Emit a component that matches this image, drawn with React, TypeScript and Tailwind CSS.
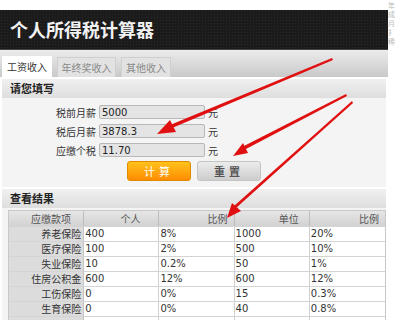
const cjk = "font-['Noto_Sans_CJK_SC','Noto_Sans',sans-serif]";
const num = "font-['DejaVu_Sans','Noto_Sans_CJK_SC',sans-serif]";

const rows = [
  ["养老保险", "400", "8%", "1000", "20%"],
  ["医疗保险", "100", "2%", "500", "10%"],
  ["失业保险", "10", "0.2%", "50", "1%"],
  ["住房公积金", "600", "12%", "600", "12%"],
  ["工伤保险", "0", "0%", "15", "0.3%"],
  ["生育保险", "0", "0%", "40", "0.8%"],
  ["", "", "", "", ""],
];

function Field({ label, value }: { label: string; value: string }) {
  return (
    <div className="flex items-center h-[14px]">
      <span className={`w-[97px] pr-[3px] text-right text-[10px] text-[#333] ${cjk}`}>{label}</span>
      <div className={`w-[106px] h-[14px] rounded-[2px] border border-[#b8b8b8] bg-[#e4e4e4] pl-[2px] text-[10px] leading-[13px] text-[#222] ${num}`}>
        {value}
      </div>
      <span className={`pl-[3px] text-[10px] text-[#333] ${cjk}`}>元</span>
    </div>
  );
}

export default function App() {
  return (
    <div className="relative w-[395px] h-[320px] overflow-hidden bg-white">
      <div className="flex w-[395px]">
        <div className="w-[388px] flex flex-col">
          <div className="h-[10px] bg-white" />
          <div className="h-[40px] bg-[#1b1b1b] bg-[radial-gradient(#2a2a2a_1px,transparent_1px)] bg-[length:3px_3px] flex items-center pl-[10px] border-b border-[#444]">
            <span className={`text-[18px] font-bold text-[#f2f2f2] ${cjk}`}>个人所得税计算器</span>
          </div>
          <div className="h-[27px] bg-gradient-to-b from-[#ececec] to-[#c9c9c9] flex items-end gap-[5px] pl-[2px]">
            <div className={`h-[21px] w-[50px] bg-white flex items-center justify-center text-[10px] text-[#333] ${cjk}`}>工资收入</div>
            <div className={`h-[20px] w-[59px] bg-[#e2e2e2] border border-[#cfcfcf] border-b-0 flex items-center justify-center text-[10px] text-[#888] ${cjk}`}>年终奖收入</div>
            <div className={`h-[20px] w-[50px] bg-[#e2e2e2] border border-[#cfcfcf] border-b-0 flex items-center justify-center text-[10px] text-[#888] ${cjk}`}>其他收入</div>
          </div>
          <div className="bg-white pt-[2px] px-[2px]">
            <div className={`h-[19px] bg-gradient-to-b from-[#f0f0f0] to-[#dedede] flex items-center pl-[8px] text-[11px] font-bold text-[#222] ${cjk}`}>请您填写</div>
            <div className="bg-[#f4f4f4] pt-[7px] pb-[6px] flex flex-col gap-[5px]">
              <Field label="税前月薪" value="5000" />
              <Field label="税后月薪" value="3878.3" />
              <Field label="应缴个税" value="11.70" />
              <div className="flex gap-[6px] pl-[125px] mt-[-1px]">
                <div className={`w-[64px] h-[20px] rounded-[3px] bg-gradient-to-b from-[#ffc21a] to-[#ff8c00] border border-[#e08a00] flex items-center justify-center text-[11px] text-white tracking-[4px] ${cjk}`}>计算</div>
                <div className={`w-[64px] h-[20px] rounded-[3px] bg-gradient-to-b from-[#ececec] to-[#cdcdcd] border border-[#c4c4c4] flex items-center justify-center text-[11px] font-bold text-[#555] tracking-[4px] ${cjk}`}>重置</div>
              </div>
            </div>
            <div className={`mt-[2px] h-[19px] bg-gradient-to-b from-[#f0f0f0] to-[#dedede] flex items-center pl-[8px] text-[11px] font-bold text-[#222] ${cjk}`}>查看结果</div>
            <div className="bg-[#f4f4f4] pt-[2px] pl-[6px]">
              <div className="border border-[#c8c8c8] w-[378px]">
                <div className={`grid grid-cols-5 h-[15px] bg-gradient-to-b from-[#e6e6e6] to-[#d2d2d2] text-[10px] text-[#555] ${cjk}`}>
                  <div className="text-center pl-[10px] border-r border-[#bdbdbd] leading-[15px]">应缴款项</div>
                  <div className="text-right pr-[18px] border-r border-[#bdbdbd] leading-[15px]">个人</div>
                  <div className="text-right pr-[6px] border-r border-[#bdbdbd] leading-[15px]">比例</div>
                  <div className="text-right pr-[10px] border-r border-[#bdbdbd] leading-[15px]">单位</div>
                  <div className="text-right pr-[6px] leading-[15px]">比例</div>
                </div>
                {rows.map((r, i) => (
                  <div key={i} className="grid grid-cols-5 h-[15px] border-t border-[#d4d4d4]">
                    <div className={`bg-[#dcdcdc] text-right pr-[2px] text-[10px] leading-[14px] text-[#333] border-r border-[#c4c4c4] ${cjk}`}>{r[0]}</div>
                    {r.slice(1).map((c, j) => (
                      <div key={j} className={`bg-white pl-[1px] text-[10px] leading-[14px] text-[#333] ${j < 3 ? "border-r border-[#d0d0d0]" : ""} ${num}`}>{c}</div>
                    ))}
                  </div>
                ))}
              </div>
            </div>
          </div>
        </div>
        <div className={`flex-1 pt-[1px] flex flex-col items-center text-[7px] leading-[9px] text-[#bbb] ${cjk}`}>
          <span>年</span><span>成</span><span>月</span><span>扌</span><span>稀</span>
        </div>
      </div>
      <svg className="absolute inset-0 pointer-events-none" width="395" height="320" viewBox="0 0 395 320">
        <g fill="#e01010" stroke="none">
          <polygon points="332,58 333,60 172,128 170,125" />
          <polygon points="157,134 170,120 176,132" />
          <polygon points="346,94 347,96 244,150 242,147" />
          <polygon points="233,156 243,143 248,153" />
          <polygon points="352,101 353,103 236,208 234,206" />
          <polygon points="227,218 232,203 241,211" />
        </g>
      </svg>
    </div>
  );
}
